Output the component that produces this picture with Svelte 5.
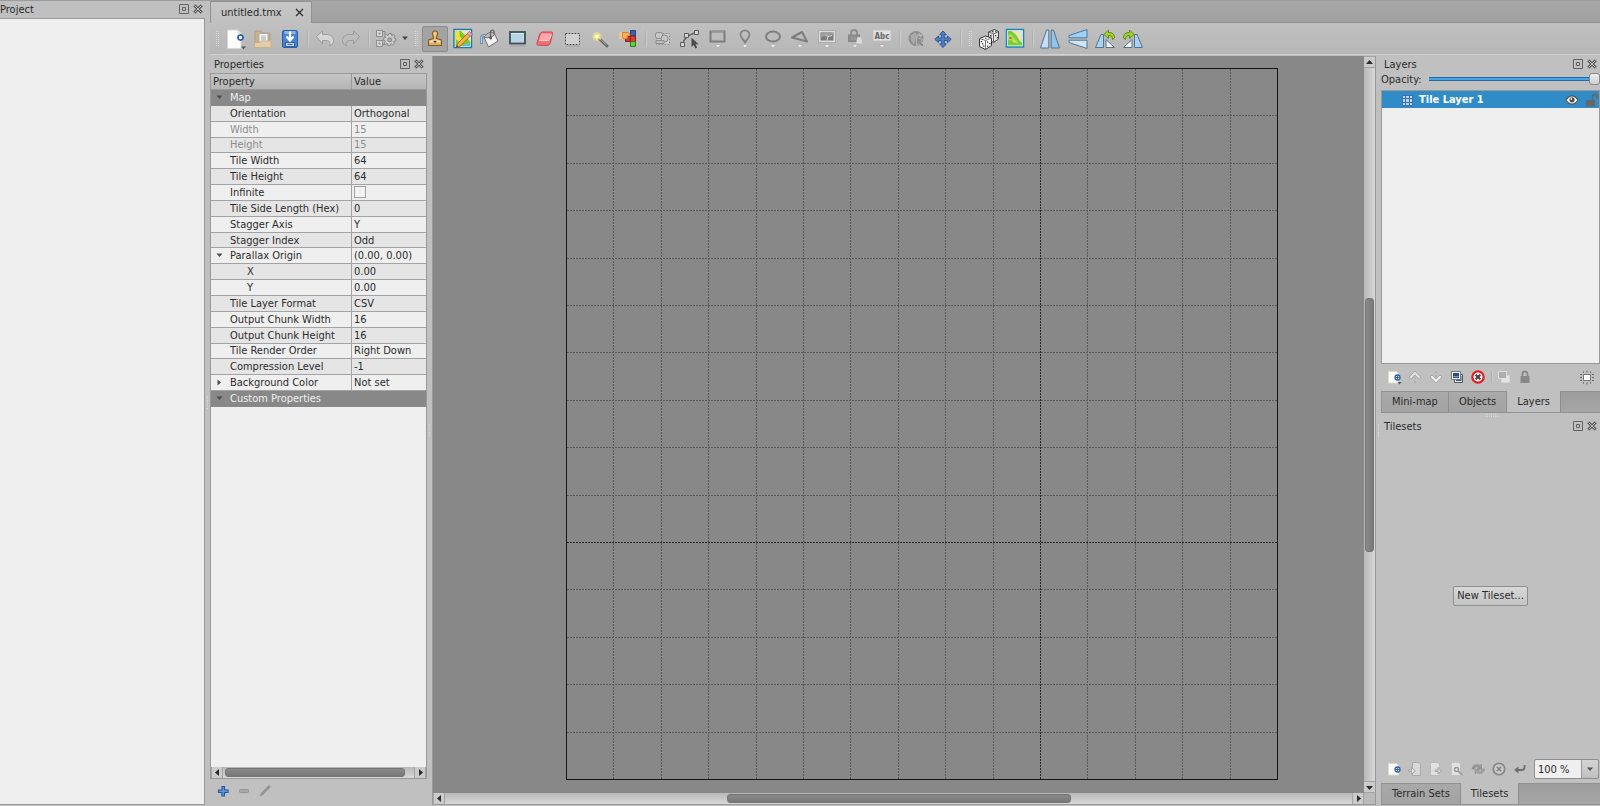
<script>
  const properties = [
    { name: 'Map', group: true, open: true },
    { name: 'Orientation', value: 'Orthogonal' },
    { name: 'Width', value: '15', disabled: true },
    { name: 'Height', value: '15', disabled: true },
    { name: 'Tile Width', value: '64' },
    { name: 'Tile Height', value: '64' },
    { name: 'Infinite', check: true },
    { name: 'Tile Side Length (Hex)', value: '0' },
    { name: 'Stagger Axis', value: 'Y' },
    { name: 'Stagger Index', value: 'Odd' },
    { name: 'Parallax Origin', value: '(0.00, 0.00)', open: true },
    { name: 'X', value: '0.00', child: true },
    { name: 'Y', value: '0.00', child: true },
    { name: 'Tile Layer Format', value: 'CSV' },
    { name: 'Output Chunk Width', value: '16' },
    { name: 'Output Chunk Height', value: '16' },
    { name: 'Tile Render Order', value: 'Right Down' },
    { name: 'Compression Level', value: '-1' },
    { name: 'Background Color', value: 'Not set', closed: true },
    { name: 'Custom Properties', group: true, open: true }
  ];

  const brushTools = ['stamp', 'terrain', 'bucket', 'shape', 'eraser', 'select', 'wand', 'same'];
  const objectTools = ['objects', 'polygon', 'rectangle', 'point', 'ellipse', 'triangle', 'image', 'template', 'text'];
  const flipTools = ['fliph', 'flipv', 'rotl', 'rotr'];
  const tilesetTools = ['newfile', 'embed', 'export', 'edit', 'replace', 'remove', 'return'];

  const cells = 15;
  const side = 711;
  const lines = Array.from({ length: cells - 1 }, (_, i) => ({ major: i + 1 === 10, at: Math.round(((i + 1) * side) / cells) + 0.5 }));

  let brush = $state('stamp');
  let layerTab = $state('Layers');
  let tilesetTab = $state('Tilesets');
</script>

{#snippet big(name)}
  <svg class="i24" viewBox="0 0 24 24" fill="none" aria-hidden="true">
    {#if name === 'new'}
      <path d="M3.500 3h10.500l3 3v15.500H3.500z" fill="#fdfdfb" stroke="#d8d8d2" />
      <path d="M14 3v3h3" stroke="#d0d0ca" />
      <circle cx="16.500" cy="10.500" r="2.500" fill="#fff" stroke="#2e62a8" stroke-width="1.600" />
      <path d="M16.500 7v1.200M16.500 12.800V14M13 10.500h1.200M18.800 10.500H20" stroke="#2e62a8" stroke-width="1.400" />
      <path d="M17 19.500h5l-2.500 2.800z" fill="#555" />
    {:else if name === 'open'}
      <path d="M4 4h6l1.500 2H19v13H4z" fill="#c9b28c" stroke="#b59f7c" />
      <path d="M8 6.500h9v9H8z" fill="#fafafa" stroke="#aaa" />
      <path d="M10 8.500h5v5h-5z" fill="#ccc" />
      <path d="M3.500 15.500h5l1-1.500h10.500v6.500H3.500z" fill="#e2cdaa" stroke="#c9b28c" />
    {:else if name === 'save'}
      <rect x="4.500" y="3.500" width="15" height="17" rx="1.500" fill="#4a83cd" stroke="#2c5ea8" />
      <path d="M6.500 4h11v3h-11z" fill="#8fb4e4" />
      <path d="M12 4.500v8M8.500 9.500l3.500 4 3.500-4" stroke="#fff" stroke-width="2.200" />
      <rect x="7.500" y="15.500" width="9" height="4" fill="#c9daf0" stroke="#2c5ea8" />
      <path d="M9.500 17.500h5" stroke="#355f99" />
    {:else if name === 'undo' || name === 'redo'}
      <g transform={name === 'redo' ? 'matrix(-1 0 0 1 24 0)' : undefined}>
        <path d="M3.500 9.500l6-5.500v3.500h4c4.500 0 7 2.500 7 6 0 2.500-1.500 4.500-4 5.500 1.500-3.500-.5-5.500-3-5.500h-4v3.500z" fill={name === 'undo' ? '#d6d6d6' : '#bdbdbd'} stroke="#9c9c9c" />
      </g>
    {:else if name === 'gear'}
      <path d="M2.500 3.500h6v6h-6zM2.500 13.500h6v6h-6z" fill="#d6d6d6" stroke="#8c8c8c" />
      <path d="M4.500 6.500h2M4.500 16.500h2M5.500 5.500v2M5.500 15.500v2M8 4.500h3v3.500M8 17.500h3" stroke="#888" />
      <path d="M15 6.500h2.200l.5 2 2-.8 1.300 1.600-1.200 1.600 2 1v2l-2.200.6.8 2-1.600 1.400-1.700-1.200-1 2h-2l-.6-2.100-2 .8-1.300-1.600 1.200-1.700-2-.9v-2l2.100-.6-.8-1.900 1.600-1.400 1.700 1.200z" fill="#cacaca" stroke="#858585" />
      <circle cx="15.700" cy="12.800" r="2" fill="#aaa" stroke="#858585" />
    {:else if name === 'stamp'}
      <path d="M12 4a2.600 2.600 0 0 1 2.500 3.500c-.5 1.200-1.200 2-1.100 4l5 1.500v5.500H5.600V13l5-1.500c.1-2-.6-2.800-1.100-4A2.600 2.600 0 0 1 12 4z" fill="#ecc98a" stroke="#8b5a1b" stroke-width="1.200" />
      <path d="M6.500 14.500h11" stroke="#fff0cc" />
      <path d="M6.500 17h11" stroke="#d6a763" stroke-width="1.500" />
      <path d="M10 14h4l-2 2z" fill="#333" />
    {:else if name === 'terrain'}
      <path d="M3 2.500h17.500v18H3z" fill="#fff" stroke="#1f7aa8" stroke-width="1.400" />
      <path d="M4.500 4h7l8 11v4h-15z" fill="#7ccb2e" />
      <path d="M10 4l9.500 10V4z" fill="#efe8b8" />
      <path d="M4.500 4h4v5l3 4-3 2-4-3z" fill="#f5e03a" />
      <path d="M13 17h6v2h-6z" fill="#68b7e0" />
      <path d="M5 20.500l2-4.500L16.500 6.500l2.800 2.500L9.500 19z" fill="#f4b04e" stroke="#a05b16" stroke-width=".8" />
      <path d="M16.200 6.700l2.200-2.200 3.200 2.600-2.400 2.400z" fill="#e7a0c8" stroke="#9b5b80" stroke-width=".7" />
      <path d="M5 20.500l.9-2.200 1.300 1.300z" fill="#333" />
    {:else if name === 'bucket'}
      <path d="M6 10.500l10.500-3.500 3.500 7-9.500 6z" fill="#f0f0f0" stroke="#707070" />
      <path d="M6 10.500q0-2.500 4.500-4.500t6 1q.5 1.500-3.500 3t-7 .5z" fill="#bdbdbd" stroke="#707070" />
      <path d="M12.500 10V4.500a1.800 1.800 0 0 1 3.500 0V7" stroke="#666" stroke-width="1.300" />
      <circle cx="12.700" cy="11" r="1.400" fill="#555" />
      <path d="M7 8.500C4.500 8 3.500 9 3.500 11v6" stroke="#5d84bb" stroke-width="2.500" />
      <path d="M7 8.500C4.500 8 3.500 9 3.500 11v5" stroke="#b9cfec" />
    {:else if name === 'shape'}
      <rect x="4" y="5" width="15" height="11.500" fill="#b7d5e2" stroke="#3f5058" stroke-width="1.800" />
      <path d="M5 6.500h13" stroke="#d9edf4" />
      <path d="M4 19h15" stroke="#999" stroke-opacity=".6" stroke-width="1.500" />
    {:else if name === 'eraser'}
      <path d="M9 5h9.500q1.500 0 1 1.600L17.300 16q-.6 2-2.500 2.300H5.500q-2 0-1.500-2l2-7Q7 5.500 9 5z" fill="#f07078" stroke="#cf444d" />
      <path d="M8.500 6.500h9q1 0 .6 1.200L16.300 13.500H6z" fill="#fba7aa" />
      <path d="M6 13.500h10l2.500-6" stroke="#ffdadb" stroke-width=".8" />
    {:else if name === 'select'}
      <rect x="4.500" y="6.500" width="14" height="11" fill="#d0d0d0" stroke="#fafafa" />
      <rect x="4.500" y="6.500" width="14" height="11" stroke="#444" stroke-dasharray="2 1" />
      <path d="M4 19h15" stroke="#a2a2a2" />
    {:else if name === 'wand'}
      <path d="M11 11.500l8 7.500" stroke="#666" stroke-width="2.800" stroke-linecap="round" />
      <path d="M11.500 11.500l7 6.500" stroke="#aaa8a0" />
      <circle cx="9" cy="9.500" r="4.500" fill="#f7ef8a" fill-opacity=".45" />
      <path d="M9 5l1 2.800 2.900-.4-2.100 2 1.900 2.400-2.900-.7-1.200 2.700-.8-2.900-2.800.3 2.100-1.900-1.600-2.300 2.700.7z" fill="#fffcc4" stroke="#e0d565" stroke-width=".5" />
    {:else if name === 'same'}
      <path d="M14.500 3.500h5v5.500h-5z" fill="#3566bb" stroke="#25467f" />
      <path d="M14.500 9h5v5.500h-5z" fill="#e8392b" stroke="#8b2018" />
      <path d="M14.500 14.500h5v5h-5z" fill="#5fcf35" stroke="#2f7d19" />
      <path d="M9.500 9.500h5v5h-5z" fill="#c8372b" stroke="#8b2018" />
      <path d="M3.500 5h3v7h-3z" fill="#f2c792" />
      <path d="M6.500 5.500h5q3 .4 2.500 2t-2.500 1.200l-.5 2.800q-2.500 1-4.500-.5z" fill="#fbb15f" stroke="#d98032" />
    {:else if name === 'objects'}
      <rect x="5.500" y="6.500" width="13" height="11" fill="#cdcdcd" stroke="#dedede" />
      <rect x="5.500" y="6.500" width="13" height="11" stroke="#8a8a8a" stroke-dasharray="2 1" />
      <rect x="4.500" y="5.500" width="7" height="6" rx="2" fill="#c8c8c8" stroke="#868686" />
      <circle cx="13.500" cy="11.500" r="3.500" fill="#c6c6c6" stroke="#8c8c8c" />
      <path d="M5 13.500h8v3H5z" fill="#bebebe" stroke="#8e8e8e" />
    {:else if name === 'polygon'}
      <path d="M4.500 17.500c1-6 4.500-9 15-12.500" stroke="#666" stroke-width="1.500" />
      <path d="M2.500 15.500h4v4h-4zM6.500 6.500h4v4h-4zM16.500 3.500h4v4h-4z" fill="#d6d6d6" stroke="#5c5c5c" />
      <path d="M13.500 10.500v9.500l2.300-2 1.500 3.500 1.800-.8-1.600-3.400h3z" fill="#4c4c4c" />
    {:else if name === 'rectangle'}
      <rect x="4.500" y="4.500" width="14" height="10" stroke="#7d7d7d" stroke-width="2" />
      <path d="M5 4.500h13" stroke="#949494" />
    {:else if name === 'point'}
      <path d="M12 15.500c-1.500-3-4.500-5-4.500-7.700a4.500 4.500 0 0 1 9 0c0 2.700-3 4.700-4.500 7.700z" stroke="#838383" stroke-width="1.800" />
    {:else if name === 'ellipse'}
      <ellipse cx="12" cy="9.500" rx="7" ry="5" stroke="#7d7d7d" stroke-width="2" />
    {:else if name === 'triangle'}
      <path d="M4 10.500l10-5.500 5 9.500z" stroke="#7d7d7d" stroke-width="2" stroke-linejoin="round" />
    {:else if name === 'image'}
      <rect x="4.500" y="4.500" width="15" height="10" fill="#7c7c7c" stroke="#dcdcdc" stroke-width="2" />
      <path d="M5.500 5.500h13v3l-3.500-1-3 3-3-1.500-3.500 2z" fill="#9c9c9c" />
      <path d="M12 13.500l1-4 4-1M13 9.500l-2-2" stroke="#d8d8d8" />
      <path d="M3.500 3.500h17v12h-17z" stroke="#999" stroke-width=".6" />
    {:else if name === 'template'}
      <path d="M8 9V6a3 3 0 0 1 6 0v3" stroke="#8e8e8e" stroke-width="2" />
      <rect x="5.500" y="8" width="11" height="6.500" fill="#8e8e8e" stroke="#858585" />
      <path d="M14.500 10l3.500.5 1.500 6h-6.500z" fill="#dcdcdc" />
      <path d="M9 10v3M12 10v3" stroke="#a5a5a5" />
    {:else if name === 'text'}
      <rect x="3.500" y="3.500" width="17" height="10" fill="#e0e0e0" stroke="#d2d2d2" />
      <text x="12" y="12" text-anchor="middle" font-size="8" font-family="DejaVu Sans Condensed, DejaVu Sans, sans-serif" font-weight="bold" fill="#666">Abc</text>
    {:else if name === 'world'}
      <circle cx="11" cy="11.500" r="7.500" fill="#8d8d8d" />
      <path d="M5.500 8.500l4.500-3 4 3-3 3-2 6-3-4z" fill="#a9a9a9" />
      <path d="M14 5.500l3.500 3-1.500 2.500-3-3z" fill="#b4b4b4" />
      <path d="M11.500 10.500v8l2-1.800 3.500 3.300 2-2-3.300-3.500 1.800-2z" fill="#8d8d8d" stroke="#bbb" stroke-width=".8" />
    {:else if name === 'move'}
      <path d="M12 4l3.300 3.700h-2V11h3.200V9l3.700 3.300-3.700 3.300v-2h-3.200v3.300h2L12 20.600l-3.300-3.700h2v-3.300H7.500v2l-3.700-3.300L7.500 9v2h3.200V7.700h-2z" fill="#4f80c5" stroke="#2d5896" />
    {:else if name === 'dice'}
      <path d="M11.500 5l6-2.500 4 2v7.500l-5 3.500-5-3z" fill="#e4e4e4" stroke="#444" />
      <path d="M11.500 5l5 2 5-2.500M16.500 7v8" stroke="#666" />
      <path d="M13 8h1.500v1.500H13zM15 4.300h1.500v1H15zM18.200 8h1v1.200h-1zM19.800 10h1v1.200h-1zM18.300 4.200h1.200v.8h-1.200z" fill="#222" />
      <path d="M2.500 11.500l6-2.500 6 2v7.500l-6 4-6-3z" fill="#fafafa" stroke="#333" />
      <path d="M2.500 11.500l6 2 6-2.500M8.500 13.500v9" stroke="#777" />
      <path d="M3.800 14h1.200v1.300H3.800zM6.200 18.500h1.200v1.300H6.200zM5 16.300h1.200v1.200H5zM10 14.500h1.200v1.300H10zM12.300 16h1.200v1.300h-1.200zM10 18.500h1.200v1.200H10zM8 10.700h1.500v1H8z" fill="#222" />
    {:else if name === 'automap'}
      <path d="M3.500 2.500h17v17.500h-17z" fill="#fff" stroke="#1f86b4" stroke-width="1.500" />
      <path d="M5 4h14v14.500H5z" fill="#78cc3a" />
      <path d="M8.500 4H19v11.500q-3-1.500-4-4.500T8.500 4z" fill="#f0e2b4" />
      <path d="M15 4h4v5q-2-1-4-5z" fill="#d4e9e6" />
      <path d="M5 8l3-1 3.500 4 3.500 4-1 2-4-3-5-1z" fill="#a6e055" />
      <path d="M6.500 10h2v2h-2z" fill="#e1522f" /><path d="M10 13h2.500v2.500H10z" fill="#f1d43a" />
    {:else if name === 'fliph'}
      <path d="M8.500 3h2.300v18H2.500z" fill="#c3e0f7" stroke="#55748c" /><path d="M15.500 3h-2.300v18h8.300z" fill="#92c3ea" stroke="#55748c" />
    {:else if name === 'flipv'}
      <path d="M21 2.500v8.300H3V8.500z" fill="#9fd0f5" stroke="#4a7ba1" /><path d="M21 21.500v-8.300H3v2.300z" fill="#cfe6f7" stroke="#55748c" />
    {:else if name === 'rotl' || name === 'rotr'}
      <g transform={name === 'rotr' ? 'matrix(-1 0 0 1 24 0)' : undefined}>
        <path d="M8 7.500h2.500v13h-8z" fill="#a9d2f2" stroke="#55748c" />
        <path d="M13 12.500l8.500 8H13z" fill="#f3f8fc" stroke="#55748c" />
        <path d="M11 7.500l4.500-4.500v2.500c4 0 6 1.700 6 5.500l-2 1.500c0-3-1.500-4-4-4v3z" fill="#9fd32a" stroke="#5c8a12" />
      </g>
    {/if}
    {#if ['rectangle', 'point', 'ellipse', 'triangle', 'image', 'template', 'text'].includes(name)}
      <path d="M9 17.500h6l-3 3.500z" fill="#ececec" stroke="#a5a5a5" stroke-width=".6" />
    {/if}
  </svg>
{/snippet}

{#snippet small(name)}
  <svg class="i16" viewBox="0 0 16 16" fill="none" aria-hidden="true">
    {#if name === 'newlayer' || name === 'newfile'}
      <path d="M2.500 2.500h8l2 2v9.500h-10z" fill="#fbfbf8" stroke="#dcdcd6" />
      <circle cx="11.500" cy="8.500" r="2.500" fill="#fff" stroke="#2e62a8" stroke-width="1.300" />
      <path d="M11.500 6.500v4M9.500 8.500h4" stroke="#2e62a8" />
      {#if name === 'newlayer'}<path d="M11.500 13h4l-2 2.500z" fill="#555" />{/if}
    {:else if name === 'up'}
      <path d="M8 2L2 8.200 4 10l4-4 4 4 2-1.800z" fill="#dedede" stroke="#989898" stroke-width=".7" /><path d="M8 8v2M8 12v2" stroke="#b0b0b0" stroke-width="2" />
    {:else if name === 'down'}
      <path d="M8 14L2 7.800 4 6l4 4 4-4 2 1.800z" fill="#efefef" stroke="#909090" stroke-width=".7" /><path d="M8 2v2M8 6v2" stroke="#b0b0b0" stroke-width="2" />
    {:else if name === 'duplicate'}
      <path d="M5.500 5.500h8v8h-8z" fill="#e9eef4" stroke="#555" /><path d="M7 7h5.500v5H7z" fill="#315892" />
      <path d="M2.500 2.500h9v8h-9z" fill="#f5f5f5" stroke="#777" /><path d="M4 4h6v5H4z" fill="#284c84" /><path d="M4.500 7.500h5" stroke="#7d9fd0" />
    {:else if name === 'delete'}
      <circle cx="8" cy="8" r="5.700" fill="#eee" stroke="#e01b24" stroke-width="2.200" /><path d="M5.700 5.700l4.600 4.600M10.300 5.700l-4.600 4.600" stroke="#444" stroke-width="2" />
    {:else if name === 'others'}
      <path d="M5.500 6.500h8v7h-8z" fill="#e4e4e4" stroke="#d4d4d4" /><path d="M2.500 2.500h8v7h-8z" fill="#adadad" stroke="#dedede" />
    {:else if name === 'lock'}
      <path d="M5.500 8V5a2.500 2.500 0 0 1 5 0v3" stroke="#888" stroke-width="1.800" /><path d="M3.500 7h9v7h-9z" fill="#888" />
    {:else if name === 'highlight'}
      <path d="M4.500 5.500h7v6h-7z" fill="#fff" stroke="#777" />
      <path d="M8 1.500v2M8 13.500v2M4.500 2.500V4M11.500 2.500V4M4.500 13v1.500M11.500 13v1.500M1 5.500h2M1 8.500h2M1 11.500h2M13 5.500h2M13 8.500h2M13 11.500h2" stroke="#666" />
    {:else if name === 'embed'}
      <path d="M5.500 1.500h6l2 2v11h-8z" fill="#d8d8d8" stroke="#aaa" /><path d="M1.500 9h3V6.500l4 3.500-4 3v-2.500h-3z" fill="#dedede" stroke="#999" stroke-width=".8" />
    {:else if name === 'export'}
      <path d="M2.500 1.500h7l2 2v11h-9z" fill="#e0e0e0" stroke="#bbb" /><path d="M7 9h3V6.500l3.500 3.500-3.500 3v-2.500H7z" fill="#d4d4d4" stroke="#999" stroke-width=".8" />
    {:else if name === 'edit'}
      <path d="M2.500 1.500h7l2 2v11h-9z" fill="#e2e2e2" stroke="#c2c2c2" /><circle cx="7.500" cy="8.500" r="2" stroke="#999" stroke-width="1.500" /><path d="M9 10l4.500 4" stroke="#a0a0a0" stroke-width="2" />
    {:else if name === 'replace'}
      <path d="M2 8c0-4 5-6 8-3.500L11.500 3v5H7l1.500-1.500C6.500 5 5 6 5 8z" fill="#989898" stroke="#858585" stroke-width=".5" /><path d="M14.500 8c0 4-5 6-8 3.500L5 13V8.500h4.500L8 10c2 1.500 3.500.5 3.500-2z" fill="#a3a3a3" stroke="#858585" stroke-width=".5" />
    {:else if name === 'remove'}
      <circle cx="8" cy="8" r="5.700" fill="#ccc" stroke="#888" stroke-width="1.800" /><path d="M5.800 5.800l4.400 4.400M10.200 5.800l-4.400 4.400" stroke="#808080" stroke-width="1.600" />
    {:else if name === 'return'}
      <path d="M12.500 4v2.500q0 2.500-3 2.500H6" stroke="#6f6f6f" stroke-width="1.800" /><path d="M2 9l4.500-3.500v7z" fill="#6f6f6f" />
    {:else if name === 'plus'}
      <path d="M7 3.500h2.500V7H13v2.500H9.500V13H7V9.500H3.500V7H7z" fill="#6a9ad6" stroke="#2458a3" stroke-width="1.200" />
    {:else if name === 'minus'}
      <rect x="3.500" y="6.500" width="9" height="3" rx="1" fill="#aaa" stroke="#949494" />
    {:else if name === 'pencil'}
      <path d="M2.500 13.500l1.500-3.500 8-8 1.800 1.800L6 12z" fill="#939393" />
    {:else if name === 'layer'}
      <path d="M3 3h11v11H3z" fill="#3c6dad" />
      <path d="M4 4h2v2H4zM7 4h3v2H7zM11 4h2v2h-2zM4 7h2v3H4zM7 7h3v3H7zM11 7h2v3h-2zM4 11h2v2H4zM7 11h3v2H7zM11 11h2v2h-2z" fill="#bcd6ef" />
    {:else if name === 'eye'}
      <path d="M2 8c3.500-5.500 8.500-5.500 12 0-3.500 5.500-8.500 5.500-12 0z" fill="#fff" stroke="#555" stroke-width="1.300" /><circle cx="8" cy="7.800" r="2.600" fill="#4c4c4c" /><circle cx="7.300" cy="7" r="1" fill="#ddd" />
    {:else if name === 'unlock'}
      <path d="M9.500 8V5a2.500 2.500 0 0 1 5 0v2" stroke="#666" stroke-width="1.600" /><path d="M3 8h9v6.500H3z" fill="#666" />
    {/if}
  </svg>
{/snippet}

{#snippet dock(title)}
  <header class="dock-title">
    <h2>{title}</h2>
    <button class="plain" aria-label={`Float ${title}`}>
      <svg width="10" height="10" viewBox="0 0 10 10" fill="none" stroke="#626262"><path d="M.5.500h9v9h-9z" /><path d="M3.500 3.500h3v3h-3z" /></svg>
    </button>
    <button class="plain" aria-label={`Close ${title}`}>
      <svg width="10" height="10" viewBox="0 0 10 10" fill="none"><path d="M1.200 1.200l7.600 7.600M8.800 1.200L1.200 8.800" stroke="#5a5a5a" stroke-width="3" /><path d="M1.500 1.500l7 7M8.500 1.500l-7 7" stroke="#c0c0c0" /></svg>
    </button>
  </header>
{/snippet}

{#snippet tool(name)}
  <button class="tool" class:checked={brush === name} aria-label={name} onclick={() => brushTools.includes(name) && (brush = name)}>{@render big(name)}</button>
{/snippet}

{#snippet minitool(name)}
  <button class="mini" aria-label={name}>{@render small(name)}</button>
{/snippet}

{#snippet arrow(d)}
  <svg width="7" height="7" viewBox="0 0 7 7" aria-hidden="true"><path {d} fill="#2b2b2b" /></svg>
{/snippet}

<div class="app">
  <section class="project">
    {@render dock('Project')}
    <div class="project-list"></div>
  </section>
  <div class="vsplit"></div>

  <main>
    <nav class="files">
      <button class="file">untitled.tmx
        <svg width="9" height="9" viewBox="0 0 9 9"><path d="M1 1l7 7M8 1L1 8" stroke="#2b2b2b" stroke-width="1.200" /></svg>
      </button>
    </nav>

    <div class="toolbar">
      <i class="grip"></i>
      <div class="tools g-file">{@render tool('new')}{@render tool('open')}{@render tool('save')}</div>
      <i class="sep"></i>
      <div class="tools">{@render tool('undo')}{@render tool('redo')}</div>
      <i class="sep"></i>
      <div class="tools">{@render tool('gear')}</div>
      <button class="plain caret" aria-label="Command menu"><svg width="8" height="5" viewBox="0 0 8 5"><path d="M1 .5h6L4 4z" fill="#444" /></svg></button>
      <i class="grip"></i>
      <div class="tools g-brush">{#each brushTools as t}{@render tool(t)}{/each}</div>
      <i class="sep"></i>
      <div class="tools g-object">{#each objectTools as t}{@render tool(t)}{/each}</div>
      <i class="sep"></i>
      <div class="tools">{@render tool('world')}{@render tool('move')}</div>
      <i class="sep"></i>
      <i class="grip"></i>
      <div class="tools">{@render tool('dice')}{@render tool('automap')}</div>
      <i class="sep"></i>
      <div class="tools g-flip">{#each flipTools as t}{@render tool(t)}{/each}</div>
    </div>

    <div class="work">
      <section class="props">
        {@render dock('Properties')}
        <div class="tree">
          <div class="tree-view">
            <table>
              <thead><tr><th>Property</th><th>Value</th></tr></thead>
              <tbody>
                {#each properties as p}
                  <tr class:group={p.group} class:disabled={p.disabled} class:child={p.child}>
                    <td colspan={p.group ? 2 : 1}>
                      <span class="name">
                        <span class="twisty">
                          {#if p.open}<svg width="7" height="5" viewBox="0 0 7 5"><path d="M.5.500h6L3.500 4z" fill="#4c4c4c" /></svg>
                          {:else if p.closed}<svg width="7" height="7" viewBox="0 0 7 7"><path d="M1.500.500v6L5 3.500z" fill="#4c4c4c" /></svg>{/if}
                        </span>{p.name}
                      </span>
                    </td>
                    {#if !p.group}
                      <td>{#if p.check}<input type="checkbox" aria-label={p.name} />{:else}{p.value}{/if}</td>
                    {/if}
                  </tr>
                {/each}
              </tbody>
            </table>
          </div>
          <div class="scroll h">
            <button class="step" aria-label="Scroll left">{@render arrow('M5 0v7L1 3.500z')}</button>
            <div class="rail"><span class="before-p"></span><span class="thumb"></span><span class="after-p"></span></div>
            <button class="step" aria-label="Scroll right">{@render arrow('M2 0v7l4-3.500z')}</button>
          </div>
        </div>
        <div class="prop-tools">{@render minitool('plus')}{@render minitool('minus')}{@render minitool('pencil')}</div>
      </section>
      <div class="vsplit"></div>

      <div class="view">
        <div class="canvas">
          <svg class="map" width={side + 1} height={side + 1} fill="none">
            {#each lines as l}
              <path d={`M${l.at} 1V${side}M1 ${l.at}H${side}`} stroke={l.major ? '#262626' : '#5a5a5a'} stroke-dasharray="2 1" />
            {/each}
            <rect x=".5" y=".5" width={side} height={side} stroke="#151515" />
          </svg>
        </div>
        <div class="scroll v">
          <button class="step" aria-label="Scroll up">{@render arrow('M0 5h7L3.500 1z')}</button>
          <div class="rail"><span class="before-v"></span><span class="thumb"></span><span class="after-v"></span></div>
          <button class="step" aria-label="Scroll down">{@render arrow('M0 2h7L3.500 6z')}</button>
        </div>
        <div class="scroll h">
          <button class="step" aria-label="Scroll left">{@render arrow('M5 0v7L1 3.500z')}</button>
          <div class="rail"><span class="before-h"></span><span class="thumb"></span><span class="after-h"></span></div>
          <button class="step" aria-label="Scroll right">{@render arrow('M2 0v7l4-3.500z')}</button>
        </div>
        <div class="corner"></div>
      </div>
      <div class="vsplit"></div>

      <aside>
        <section class="layers">
          {@render dock('Layers')}
          <div class="opacity">
            <label for="opacity">Opacity:</label>
            <input id="opacity" type="range" min="0" max="100" value="100" />
          </div>
          <ul class="list">
            <li>{@render small('layer')}<b>Tile Layer 1</b>{@render small('eye')}{@render small('unlock')}</li>
          </ul>
          <div class="minibar">
            {#each ['newlayer', 'up', 'down', 'duplicate', 'delete'] as t}{@render minitool(t)}{/each}
            <i class="sep"></i>
            {@render minitool('others')}{@render minitool('lock')}
            <span class="fill"></span>
            {@render minitool('highlight')}
          </div>
          <div class="tabs">
            {#each ['Mini-map', 'Objects', 'Layers'] as t}<button class:current={layerTab === t} onclick={() => (layerTab = t)}>{t}</button>{/each}
          </div>
        </section>
        <div class="hsplit"></div>
        <section class="tilesets">
          {@render dock('Tilesets')}
          <div class="empty"><button class="push">New Tileset...</button></div>
          <div class="minibar">
            {#each tilesetTools as t}{@render minitool(t)}{/each}
            <span class="combo">
              <select aria-label="Zoom"><option>100 %</option><option>200 %</option></select>
              <svg width="8" height="5" viewBox="0 0 8 5"><path d="M1 .5h6L4 4z" fill="#555" /></svg>
            </span>
          </div>
          <div class="tabs">
            {#each ['Terrain Sets', 'Tilesets'] as t}<button class:current={tilesetTab === t} onclick={() => (tilesetTab = t)}>{t}</button>{/each}
          </div>
        </section>
      </aside>
    </div>
  </main>
</div>

<style>
  :global(body) { margin: 0; }
  * { box-sizing: border-box; }
  .app {
    display: flex; height: 100vh; padding-bottom: 1px; overflow: hidden;
    background: #c0c0c0; color: #2b2b2b; border-top: 1px solid #9b9b9b;
    font: 11px/13px "DejaVu Sans Condensed", "DejaVu Sans", sans-serif;
  }
  button, select, input { font: inherit; color: inherit; margin: 0; }
  button { padding: 0; border: 0; background: none; }
  svg { display: block; flex: none; }
  .i24 { width: 24px; height: 24px; }
  .i16 { width: 16px; height: 16px; }

  .project { display: flex; flex-direction: column; width: 205px; flex: none; }
  .project .dock-title { padding-right: 2px; }
  .project-list { flex: 1; background: #efefef; border: solid #999; border-width: 1px 1px 1px 0; }
  .dock-title { display: flex; align-items: center; height: 17px; gap: 4px; padding: 0 3px 1px 0; flex: none; }
  h2 { flex: 1; margin: 0; font: inherit; }
  .plain { display: flex; align-items: center; justify-content: center; }
  .vsplit, .hsplit { flex: none; display: flex; align-items: center; justify-content: center; }
  .vsplit { width: 5px; }
  .hsplit { height: 5px; }
  .vsplit::before, .hsplit::before, .grip { background: conic-gradient(#d8d8d8 25%, transparent 0) 0 0 / 2px 2px; }
  .vsplit::before, .hsplit::before { content: ""; width: 3px; height: 14px; }
  .hsplit::before { width: 14px; height: 3px; }

  main { flex: 1; min-width: 0; display: flex; flex-direction: column; }
  .files { display: flex; flex: none; height: 22px; background: linear-gradient(#a8a8a8, #9f9f9f); box-shadow: inset 0 -1px #929292; }
  .file { display: flex; align-items: center; width: 102px; padding: 0 7px 0 10px; white-space: nowrap; background: linear-gradient(#c6c6c6, #c0c0c0); border: solid #929292; border-width: 1px 1px 0; }
  .file svg { margin-left: auto; }
  .toolbar { display: flex; align-items: center; flex: none; height: 32px; padding-left: 2px; background: linear-gradient(#c0c0c0, #b7b7b7); border-bottom: 1px solid #d2d2d2; }
  .tools { display: flex; justify-content: space-between; flex: none; }
  .g-file { width: 80px; }
  .g-brush { width: 219px; }
  .g-object { width: 245px; }
  .g-flip { width: 109px; }
  .tool { display: flex; align-items: center; justify-content: center; width: 26px; height: 26px; border-radius: 2px; }
  .tool.checked { background: #a3a3a3; border: 1px solid #8c8c8c; }
  .caret { width: 12px; height: 26px; }
  .sep { flex: none; width: 2px; height: 16px; margin: 0 3px 0 4px; border-left: 1px solid #adadad; border-right: 1px solid #cdcdcd; }
  .grip { flex: none; width: 5px; height: 15px; margin: 0 3px; }

  .work { flex: 1; min-height: 0; display: flex; padding-top: 1px; }
  .props { display: flex; flex-direction: column; flex: none; width: 217px; }
  .props .dock-title { padding-left: 4px; }
  .tree { flex: 1; min-height: 0; display: flex; flex-direction: column; border: 1px solid #999; background: #efefef; }
  .tree-view { flex: 1; min-height: 0; overflow: hidden; }
  table { width: 100%; height: 333px; border-collapse: separate; border-spacing: 0; table-layout: fixed; }
  th { width: 140px; height: 16px; padding: 0 2px; text-align: left; font-weight: normal; background: linear-gradient(#c6c6c6, #b5b5b5); border-bottom: 1px solid #999; }
  th + th { width: auto; border-left: 1px solid #999; }
  td { padding: 0 0 0 2px; line-height: 13px; border-bottom: 1px solid #a3a3a3; white-space: nowrap; }
  td + td { border-left: 1px solid #a3a3a3; }
  tbody tr { background: #efefef; }
  tbody tr:nth-child(even) { background: #e5e5e5; }
  tbody tr.group { background: #888; color: #f0f0f0; }
  .group td { border-color: #888; }
  .disabled { color: #8d8d8d; }
  .name { display: flex; align-items: center; }
  .twisty { width: 17px; padding-left: 3px; }
  .child .twisty { width: 34px; }
  td input { appearance: none; display: block; width: 12px; height: 12px; border: 1px solid #a0a0a0; background: #f3f3f3; }
  .prop-tools { display: flex; align-items: center; flex: none; height: 26px; padding: 0 0 2px 5px; gap: 5px; }

  .scroll { display: flex; background: linear-gradient(#b8b8b8, #d8d8d8); }
  .scroll.h { height: 11px; flex: none; }
  .scroll.v { flex-direction: column; background: linear-gradient(90deg, #b8b8b8, #d8d8d8); }
  .step { display: flex; align-items: center; justify-content: center; width: 12px; height: 11px; background: #cbcbcb; border: solid #a4a4a4; border-width: 0 1px; flex: none; }
  .v .step { width: 11px; height: 12px; border-width: 1px 0; }
  .rail { flex: 1; display: flex; min-width: 0; min-height: 0; padding: 1px; }
  .v .rail { flex-direction: column; }
  .thumb { flex: 182; background: linear-gradient(#8a8a8a, #787878); border: 1px solid #747474; border-radius: 3px; }
  .before-p { flex: 1; }
  .after-p { flex: 8; }
  .before-h { flex: 282; }
  .after-h { flex: 281; }
  .view .h .thumb { flex: 343; }
  .before-v { flex: 229; }
  .after-v { flex: 228; }
  .v .thumb { flex: 253; background: linear-gradient(90deg, #8a8a8a, #787878); }

  .view { flex: 1; min-width: 0; display: grid; grid-template: 1fr 11px / 1fr 11px; border: solid #999; border-width: 0 1px 1px; }
  .canvas { position: relative; overflow: hidden; background: #888; }
  .map { position: absolute; left: 133px; top: 12px; }
  .corner { background: #bababa; }

  aside { display: flex; flex-direction: column; flex: none; width: 219px; }
  aside .dock-title { padding-left: 3px; }
  .layers { display: flex; flex-direction: column; flex: 357; }
  .opacity { display: flex; align-items: flex-start; gap: 7px; height: 17px; flex: none; }
  .opacity input { appearance: none; flex: 1; min-width: 0; height: 12px; border-radius: 2px; background: linear-gradient(transparent 4px, #26699d 4px, #26699d 5px, #43a5ee 5px, #43a5ee 7px, #26699d 7px, #26699d 8px, transparent 8px); }
  .opacity input::-webkit-slider-thumb { appearance: none; width: 11px; height: 12px; border: 1px solid #888; border-radius: 3px; background: linear-gradient(#eee, #cfcfcf); }
  .list { flex: 1; margin: 0; padding: 0; list-style: none; background: #efefef; border: 1px solid #999; }
  li { display: flex; align-items: center; height: 17px; padding-left: 17px; background: #308cc6; color: #fff; }
  li b { flex: 1; padding-left: 4px; }
  li :global(svg:last-child) { margin-left: 3px; }
  .minibar { display: flex; align-items: center; flex: none; height: 27px; padding: 0 0 1px 5px; }
  .minibar .mini { margin-right: 5px; }
  .minibar .sep { margin: 0 3px 0 0; height: 12px; }
  .fill { flex: 1; }
  .tabs { display: flex; flex: none; height: 22px; background: linear-gradient(#9c9c9c, #a6a6a6); border: solid #929292; border-width: 1px 0 1px 1px; }
  .tabs button { padding: 0 10px 1px; background: linear-gradient(#a9a9a9, #a3a3a3); border-right: 1px solid #8e8e8e; }
  .tabs .current { background: #c0c0c0; margin-top: -1px; padding-bottom: 0; }
  .tilesets { display: flex; flex-direction: column; flex: 386; }
  .empty { flex: 1; display: flex; align-items: center; justify-content: center; }
  .push { height: 20px; padding: 0 3px; border: 1px solid #8f8f8f; border-radius: 2px; background: linear-gradient(#d8d8d8, #c3c3c3); white-space: nowrap; }
  .combo { position: relative; display: flex; flex: 1; height: 20px; margin: 0 1px; }
  .combo select { appearance: none; width: 100%; padding: 0 3px; border: 1px solid #8f8f8f; border-radius: 2px; background: linear-gradient(90deg, #999, #999) right 16px top / 1px 100% no-repeat, linear-gradient(#d5d5d5, #bfbfbf) right / 16px 100% no-repeat, #efefef; }
  .combo svg { position: absolute; right: 5px; top: 8px; pointer-events: none; }
</style>
